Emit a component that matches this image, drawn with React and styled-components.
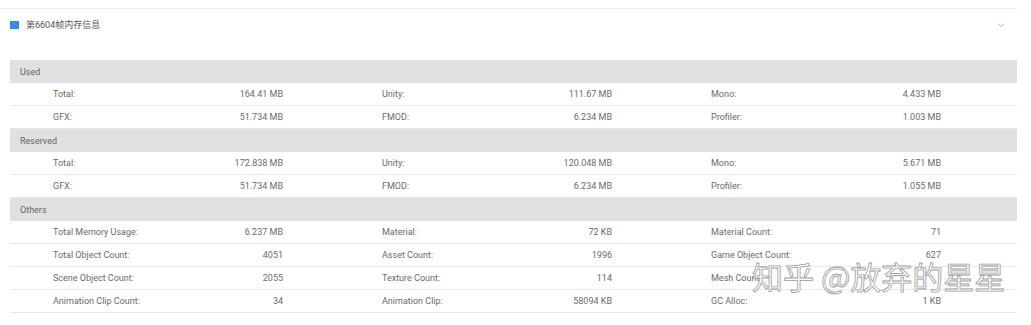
import React from "react";
import styled, { createGlobalStyle } from "styled-components";

const Global = createGlobalStyle`
  html, body { margin: 0; padding: 0; background: #fff; }
  body { font-family: Roboto, "Noto Sans CJK SC", sans-serif; }
`;

const Card = styled.div`
  position: relative;
  margin-top: 8px;
  width: 1017px;
  border-top: 1px solid #efefef;
`;

const Header = styled.div`
  display: flex;
  align-items: center;
  height: 31px;
  padding: 0 10px;
  box-sizing: border-box;
`;

const Marker = styled.span`
  width: 9px;
  height: 8px;
  background: #2b8fe6;
  margin-right: 7px;
  margin-top: 1px;
`;

const Title = styled.span`
  font-size: 9px;
  color: #555;
  flex: 1;
  font-family: Roboto, "Noto Sans CJK SC", sans-serif;
`;

const Chevron = styled.svg`
  width: 8px;
  height: 6px;
  margin-right: 2px;
`;

const Body = styled.div`
  padding: 20px 0 0 10px;
`;

const SectionHead = styled.div`
  height: 23px;
  background: #e0e0e0;
  display: flex;
  align-items: center;
  padding-left: 10px;
  font-size: 9px;
  color: #666;
`;

const Row = styled.div`
  display: grid;
  grid-template-columns: repeat(3, 329px);
  height: 22px;
  border-bottom: 1px solid #e8e8e8;
  align-items: center;
  font-size: 9px;
  color: #6a6a6a;
`;

const Cell = styled.div`
  display: flex;
  justify-content: space-between;
  padding: 0 56px 0 43px;
`;

const Watermark = styled.div`
  position: absolute;
  left: 752px;
  top: 252px;
  font-size: 31px;
  line-height: 30px;
  letter-spacing: 0;
  font-family: "Noto Sans CJK SC", sans-serif;
  color: #fff;
  -webkit-text-stroke: 0.8px #9a9a9a;
  pointer-events: none;
  white-space: nowrap;
`;

const sections = [
  {
    name: "Used",
    rows: [
      [["Total:", "164.41 MB"], ["Unity:", "111.67 MB"], ["Mono:", "4.433 MB"]],
      [["GFX:", "51.734 MB"], ["FMOD:", "6.234 MB"], ["Profiler:", "1.003 MB"]],
    ],
  },
  {
    name: "Reserved",
    rows: [
      [["Total:", "172.838 MB"], ["Unity:", "120.048 MB"], ["Mono:", "5.671 MB"]],
      [["GFX:", "51.734 MB"], ["FMOD:", "6.234 MB"], ["Profiler:", "1.055 MB"]],
    ],
  },
  {
    name: "Others",
    rows: [
      [["Total Memory Usage:", "6.237 MB"], ["Material:", "72 KB"], ["Material Count:", "71"]],
      [["Total Object Count:", "4051"], ["Asset Count:", "1996"], ["Game Object Count:", "627"]],
      [["Scene Object Count:", "2055"], ["Texture Count:", "114"], ["Mesh Count:", ""]],
      [["Animation Clip Count:", "34"], ["Animation Clip:", "58094 KB"], ["GC Alloc:", "1 KB"]],
    ],
  },
];

export default function App() {
  return (
    <>
      <Global />
      <Card>
        <Header>
          <Marker />
          <Title>第6604帧内存信息</Title>
          <Chevron viewBox="0 0 8 6">
            <path d="M1 1.5 L4 4.5 L7 1.5" fill="none" stroke="#aaa" strokeWidth="1" />
          </Chevron>
        </Header>
        <Body>
          {sections.map((s) => (
            <div key={s.name}>
              <SectionHead>{s.name}</SectionHead>
              {s.rows.map((r, i) => (
                <Row key={i}>
                  {r.map(([l, v]) => (
                    <Cell key={l}>
                      <span>{l}</span>
                      <span>{v}</span>
                    </Cell>
                  ))}
                </Row>
              ))}
            </div>
          ))}
        </Body>
        <Watermark>知乎 @放弃的星星</Watermark>
      </Card>
    </>
  );
}
